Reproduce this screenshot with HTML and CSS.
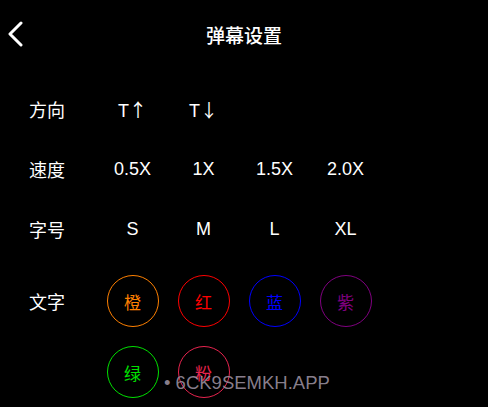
FILE: index.html
```html
<!DOCTYPE html>
<html lang="zh-CN">
<head>
  <meta charset="UTF-8">
  <meta name="viewport" content="width=device-width, initial-scale=1.0">
  <title>弹幕设置</title>
  <link rel="stylesheet" href="styles.css">
</head>
<body>
  <div class="page">
    <div class="header">
      <span class="back">
        <svg width="16" height="26" viewBox="0 0 16 26">
          <path d="M14 2 L3 13 L14 24" fill="none" stroke="#fff" stroke-width="3" stroke-linecap="round" stroke-linejoin="round"/>
        </svg>
      </span>
      <div class="title">弹幕设置</div>
    </div>

    <div class="settings">
      <div class="row">
        <div class="label">方向</div>
        <div class="opt">T<span class="arrow">↑</span></div>
        <div class="opt">T<span class="arrow">↓</span></div>
      </div>
      <div class="row">
        <div class="label">速度</div>
        <div class="opt">0.5X</div>
        <div class="opt">1X</div>
        <div class="opt">1.5X</div>
        <div class="opt">2.0X</div>
      </div>
      <div class="row">
        <div class="label">字号</div>
        <div class="opt">S</div>
        <div class="opt">M</div>
        <div class="opt">L</div>
        <div class="opt">XL</div>
      </div>
      <div class="row color-row">
        <div class="label">文字</div>
        <div class="colors">
          <div class="dot orange">橙</div>
          <div class="dot red">红</div>
          <div class="dot blue">蓝</div>
          <div class="dot purple">紫</div>
          <div class="dot green">绿</div>
          <div class="dot pink">粉</div>
        </div>
      </div>
    </div>

    <div class="watermark">• 6CK9SEMKH.APP</div>
  </div>
</body>
</html>
```

FILE: styles.css
```css
body {
  margin: 0;
  background: #000;
  color: #fff;
  font-family: "Liberation Sans", "Noto Sans CJK SC", sans-serif;
}
.page {
  position: relative;
  width: 488px;
  height: 407px;
  overflow: hidden;
}
.header {
  position: relative;
  height: 68px;
  display: flex;
  align-items: center;
  justify-content: center;
}
.back {
  position: absolute;
  left: 7px;
  top: 21px;
  width: 16px;
  height: 26px;
}
.title {
  font-family: "Noto Sans CJK SC", sans-serif;
  font-size: 19px;
  font-weight: 500;
}
.settings {
  padding-left: 29px;
  padding-top: 11px;
}
.row {
  display: flex;
  align-items: center;
  height: 60px;
}
.label {
  width: 68px;
  font-family: "Noto Sans CJK SC", sans-serif;
  font-size: 18px;
  flex-shrink: 0;
}
.opt {
  width: 71px;
  text-align: center;
  font-size: 18px;
}
.arrow {
  font-family: "Noto Sans CJK SC", sans-serif;
}
.color-row {
  height: auto;
  align-items: flex-start;
  margin-top: 16px;
}
.color-row .label {
  line-height: 52px;
}
.colors {
  display: grid;
  grid-template-columns: repeat(4, 71px);
  row-gap: 19px;
}
.dot {
  width: 52px;
  height: 52px;
  margin: 0 auto;
  box-sizing: border-box;
  border: 1.5px solid;
  border-radius: 50%;
  display: flex;
  align-items: center;
  justify-content: center;
  font-family: "Noto Sans CJK SC", sans-serif;
  font-size: 17px;
}
.orange { color: #ff8000; }
.red { color: #ff0000; }
.blue { color: #0000ff; }
.purple { color: #800080; }
.green { color: #00e000; }
.pink { color: #e8244f; }
.watermark {
  position: absolute;
  left: 164px;
  top: 372px;
  font-size: 18.5px;
  color: rgba(160, 150, 165, 0.85);
}
```
